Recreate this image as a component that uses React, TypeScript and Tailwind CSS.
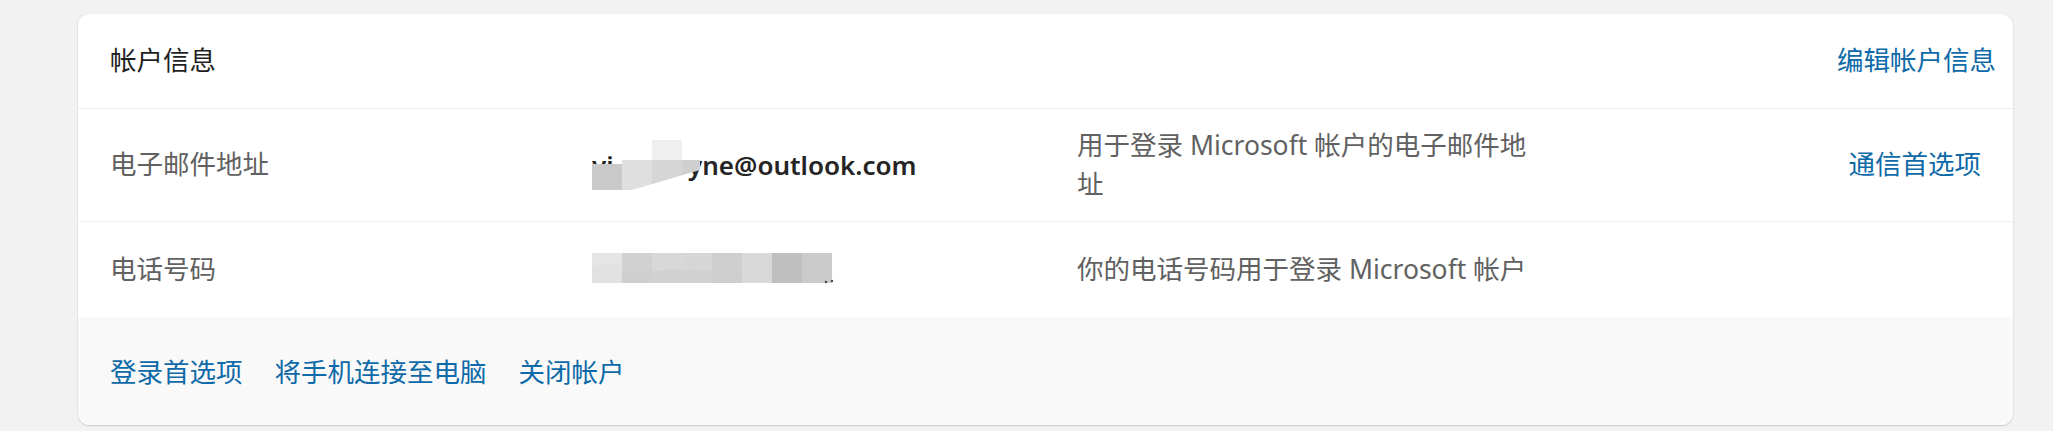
import React from "react";

const font = { fontFamily: '"Noto Sans", "Noto Sans CJK SC", sans-serif' };

function EmailBlur() {
  return (
    <svg width="112" height="52" viewBox="0 0 112 52" className="absolute left-0 top-[-6px]">
      <rect x="60" y="0" width="30" height="20" fill="#efefef" />
      <clipPath id="emailclip">
        <polygon points="0,20 108,20 108,30 40,50 0,50" />
      </clipPath>
      <g clipPath="url(#emailclip)">
        <rect x="0" y="24" width="30" height="30" fill="#c9c9c9" />
        <rect x="30" y="20" width="30" height="34" fill="#dfdfdf" />
        <rect x="60" y="20" width="30" height="34" fill="#d6d6d6" />
        <rect x="90" y="20" width="22" height="34" fill="#cfcfcf" />
      </g>
    </svg>
  );
}

function PhoneBlur() {
  const shades = ["#e6e6e6", "#d1d1d1", "#d8d8d8", "#d6d6d6", "#cfcfcf", "#d9d9d9", "#bfbfbf", "#cbcbcb"];
  return (
    <svg width="245" height="34" viewBox="0 0 245 34">
      {shades.map((c, i) => (
        <rect key={i} x={i * 30} y="0" width="30" height="30" fill={c} />
      ))}
      <path d="M0 14 C 10 8, 20 10, 30 12 L30 30 L0 30 Z" fill="#e2e2e2" />
      <path d="M30 22 C 80 14, 110 16, 150 22 L150 30 L30 30 Z" fill="#cdcdcd" opacity="0.6" />
      <circle cx="234" cy="29" r="1.2" fill="#444" />
      <circle cx="240" cy="28" r="1.2" fill="#444" />
    </svg>
  );
}

export default function App() {
  return (
    <div className="min-h-[431px] bg-[#f2f2f2] pt-[14px] pl-[78px] pr-[40px] pb-[6px]" style={font}>
      <div className="overflow-hidden rounded-[12px] bg-white shadow-[0_1px_2px_rgba(0,0,0,0.16),0_0_2px_rgba(0,0,0,0.05)]">
        <div className="flex h-[95px] items-center justify-between border-b border-[#efefef] pl-[32px] pr-[17px]">
          <h2 className="text-[26.5px] font-normal text-[#1f1f1f]">帐户信息</h2>
          <a className="cursor-pointer text-[26.5px] text-[#0e6aa8]">编辑帐户信息</a>
        </div>

        <div className="grid h-[113px] grid-cols-[482px_485px_465px_1fr] items-center border-b border-[#efefef] px-[32px]">
          <div className="text-[26.5px] text-[#616161]">电子邮件地址</div>
          <div className="relative pl-[96px] text-[26px] font-semibold text-[#242424]">
            <span className="absolute left-0 top-0">yi</span>
            yne@outlook.com
            <EmailBlur />
          </div>
          <div className="text-[26.5px] leading-[39px] text-[#616161]">用于登录 Microsoft 帐户的电子邮件地址</div>
          <div className="text-right">
            <a className="cursor-pointer text-[26.5px] text-[#0e6aa8]">通信首选项</a>
          </div>
        </div>

        <div className="grid h-[95px] grid-cols-[482px_485px_465px_1fr] items-center px-[32px]">
          <div className="text-[26.5px] text-[#616161]">电话号码</div>
          <div className="flex items-center">
            <PhoneBlur />
          </div>
          <div className="text-[26.5px] leading-[39px] text-[#616161]">你的电话号码用于登录 Microsoft 帐户</div>
          <div />
        </div>

        <div className="flex h-[108px] items-center gap-[32px] bg-[#f9f9f9] px-[32px] pt-[4px]">
          <a className="cursor-pointer text-[26.5px] text-[#0e6aa8]">登录首选项</a>
          <a className="cursor-pointer text-[26.5px] text-[#0e6aa8]">将手机连接至电脑</a>
          <a className="cursor-pointer text-[26.5px] text-[#0e6aa8]">关闭帐户</a>
        </div>
      </div>
    </div>
  );
}
